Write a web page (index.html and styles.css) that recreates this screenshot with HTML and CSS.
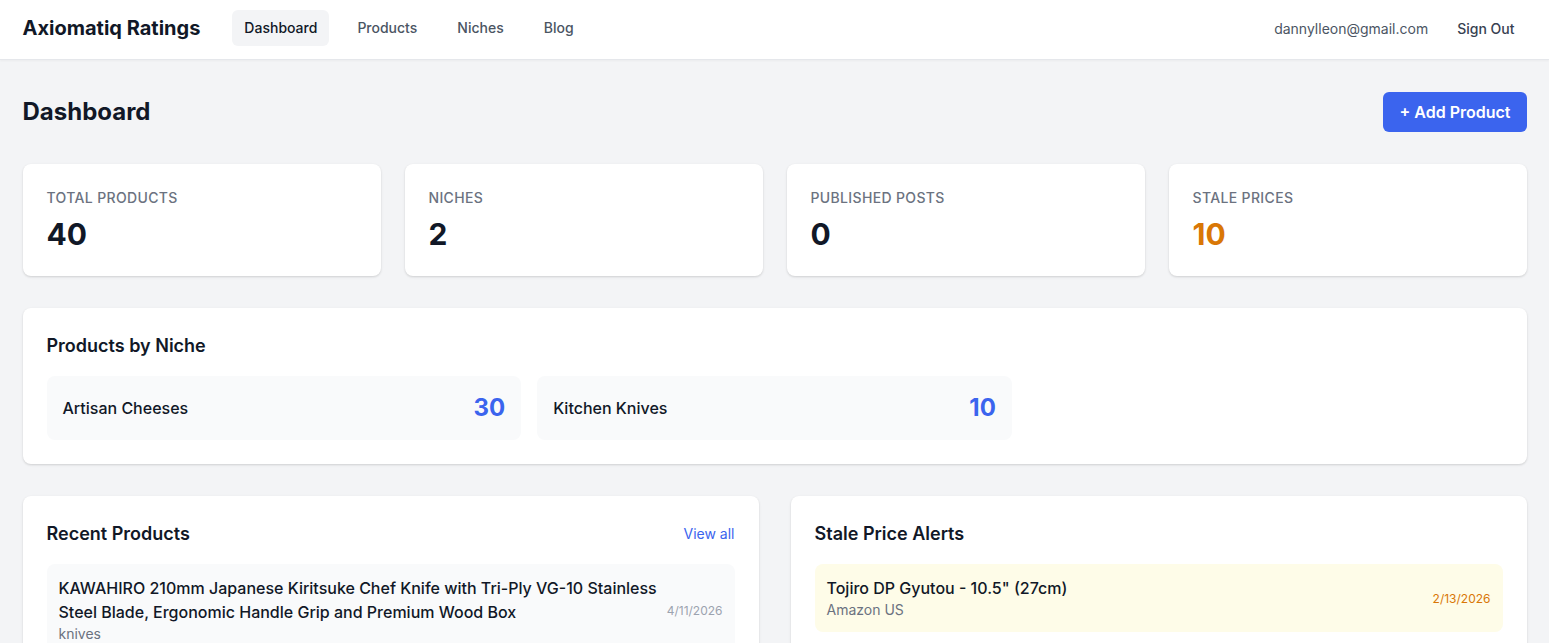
FILE: index.html
```html
<!DOCTYPE html>
<html lang="en">
<head>
    <meta charset="UTF-8">
    <meta name="viewport" content="width=device-width, initial-scale=1.0">
    <title>Dashboard - Axiomatiq Ratings</title>
    <link rel="stylesheet" href="styles.css">
</head>
<body>
    <header class="topbar">
        <div class="wrap topbar-inner">
            <div class="topbar-left">
                <a href="#" class="logo">Axiomatiq Ratings</a>
                <nav class="nav">
                    <a href="#" class="nav-link active">Dashboard</a>
                    <a href="#" class="nav-link">Products</a>
                    <a href="#" class="nav-link">Niches</a>
                    <a href="#" class="nav-link">Blog</a>
                </nav>
            </div>
            <div class="topbar-right">
                <span class="user-email">dannylleon@gmail.com</span>
                <a href="#" class="sign-out">Sign Out</a>
            </div>
        </div>
    </header>

    <main class="wrap main">
        <div class="page-head">
            <h1>Dashboard</h1>
            <a href="#" class="btn-primary">+ Add Product</a>
        </div>

        <div class="stats">
            <div class="card stat">
                <p class="stat-label">Total Products</p>
                <p class="stat-value">40</p>
            </div>
            <div class="card stat">
                <p class="stat-label">Niches</p>
                <p class="stat-value">2</p>
            </div>
            <div class="card stat">
                <p class="stat-label">Published Posts</p>
                <p class="stat-value">0</p>
            </div>
            <div class="card stat">
                <p class="stat-label">Stale Prices</p>
                <p class="stat-value warn">10</p>
            </div>
        </div>

        <section class="card panel">
            <h2>Products by Niche</h2>
            <div class="niche-grid">
                <div class="niche">
                    <span class="niche-name">Artisan Cheeses</span>
                    <span class="niche-count">30</span>
                </div>
                <div class="niche">
                    <span class="niche-name">Kitchen Knives</span>
                    <span class="niche-count">10</span>
                </div>
            </div>
        </section>

        <div class="two-col">
            <section class="card panel">
                <div class="panel-head">
                    <h2>Recent Products</h2>
                    <a href="#" class="view-all">View all</a>
                </div>
                <div class="list">
                    <div class="list-item">
                        <div class="item-text">
                            <p class="item-title">KAWAHIRO 210mm Japanese Kiritsuke Chef Knife with Tri-Ply VG-10 Stainless Steel Blade, Ergonomic Handle Grip and Premium Wood Box</p>
                            <p class="item-sub">knives</p>
                        </div>
                        <span class="item-date">4/11/2026</span>
                    </div>
                </div>
            </section>

            <section class="card panel">
                <div class="panel-head">
                    <h2>Stale Price Alerts</h2>
                </div>
                <div class="list">
                    <div class="list-item alert">
                        <div class="item-text">
                            <p class="item-title">Tojiro DP Gyutou - 10.5" (27cm)</p>
                            <p class="item-sub">Amazon US</p>
                        </div>
                        <span class="item-date warn">2/13/2026</span>
                    </div>
                </div>
            </section>
        </div>
    </main>
</body>
</html>
```

FILE: styles.css
```css
* {
    margin: 0;
    padding: 0;
    box-sizing: border-box;
}

body {
    font-family: Inter, 'Noto Sans', sans-serif;
    background: #f3f4f6;
    color: #111827;
}

a {
    text-decoration: none;
    color: inherit;
}

.wrap {
    max-width: 1536px;
    margin: 0 auto;
    padding: 0 16px;
}

/* top bar */
.topbar {
    background: #fff;
    border-bottom: 1px solid #e5e7eb;
    box-shadow: 0 1px 2px rgba(0, 0, 0, 0.04);
    padding-bottom: 3px;
}

.topbar-inner {
    height: 56px;
    display: flex;
    align-items: center;
    justify-content: space-between;
}

.topbar-left {
    display: flex;
    align-items: center;
}

.logo {
    font-size: 20px;
    font-weight: 700;
    color: #111827;
    margin-right: 32px;
}

.nav {
    display: flex;
    gap: 16px;
}

.nav-link {
    font-size: 14px;
    line-height: 20px;
    padding: 8px 12px;
    border-radius: 6px;
    color: #4b5563;
    font-weight: 500;
}

.nav-link.active {
    background: #f3f4f6;
    color: #111827;
}

.topbar-right {
    display: flex;
    align-items: center;
    gap: 17px;
}

.user-email {
    font-size: 14px;
    color: #4b5563;
}

.sign-out {
    font-size: 14px;
    font-weight: 500;
    color: #374151;
    padding: 8px 12px;
}

/* main */
.main {
    padding-top: 32px;
    padding-bottom: 32px;
}

.page-head {
    display: flex;
    align-items: center;
    justify-content: space-between;
    margin-bottom: 32px;
}

h1 {
    font-size: 24px;
    line-height: 40px;
    font-weight: 700;
}

.btn-primary {
    background: #3b64ee;
    color: #fff;
    font-size: 16px;
    font-weight: 600;
    line-height: 24px;
    padding: 8px 16px;
    border-radius: 6px;
}

.card {
    background: #fff;
    border-radius: 8px;
    box-shadow: 0 1px 3px rgba(0, 0, 0, 0.1), 0 1px 2px rgba(0, 0, 0, 0.06);
}

.stats {
    display: grid;
    grid-template-columns: repeat(4, 1fr);
    gap: 24px;
    margin-bottom: 32px;
}

.stat {
    padding: 24px;
}

.stat-label {
    font-size: 14px;
    line-height: 20px;
    color: #6b7280;
    text-transform: uppercase;
    letter-spacing: 0.025em;
    font-weight: 500;
}

.stat-value {
    margin-top: 8px;
    font-size: 30px;
    line-height: 36px;
    font-weight: 700;
    color: #111827;
}

.stat-value.warn {
    color: #d97706;
}

.panel {
    padding: 24px;
    margin-bottom: 32px;
}

.panel h2 {
    font-size: 18px;
    line-height: 28px;
    font-weight: 600;
    color: #111827;
    margin-bottom: 16px;
}

.niche-grid {
    display: grid;
    grid-template-columns: repeat(3, 1fr);
    gap: 16px;
}

.niche {
    background: #f9fafb;
    border-radius: 8px;
    padding: 16px;
    display: flex;
    align-items: center;
    justify-content: space-between;
}

.niche-name {
    font-size: 16px;
    font-weight: 500;
    color: #111827;
}

.niche-count {
    font-size: 24px;
    line-height: 32px;
    font-weight: 700;
    color: #3b64ee;
}

.two-col {
    display: grid;
    grid-template-columns: 1fr 1fr;
    gap: 32px;
}

.panel-head {
    display: flex;
    align-items: flex-start;
    justify-content: space-between;
    margin-bottom: 16px;
}

.panel-head h2 {
    margin-bottom: 0;
}

.view-all {
    font-size: 14px;
    line-height: 28px;
    color: #3b64ee;
}

.list {
    display: flex;
    flex-direction: column;
    gap: 12px;
}

.list-item {
    background: #f9fafb;
    border-radius: 8px;
    padding: 12px;
    display: flex;
    align-items: center;
    justify-content: space-between;
    gap: 8px;
}

.list-item.alert {
    background: #fefce8;
}

.item-title {
    font-size: 16px;
    line-height: 24px;
    font-weight: 500;
    color: #111827;
}

.item-sub {
    font-size: 14px;
    line-height: 20px;
    color: #6b7280;
}

.item-date {
    font-size: 12px;
    color: #9ca3af;
    white-space: nowrap;
}

.item-date.warn {
    color: #d97706;
}
```
